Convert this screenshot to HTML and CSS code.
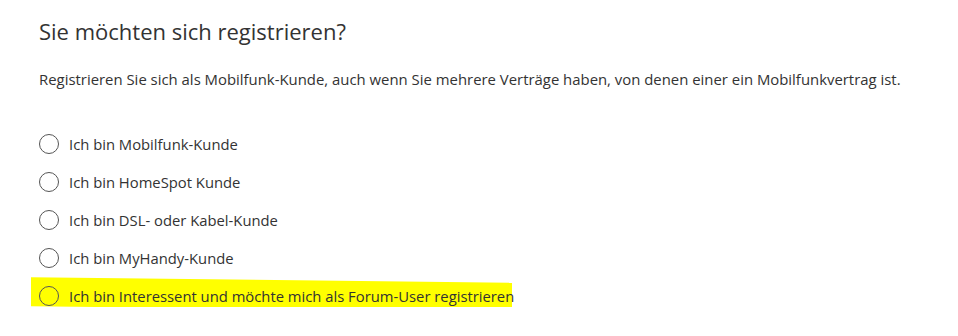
FILE: index.html
```html
<!DOCTYPE html>
<html lang="de">
<head>
<meta charset="utf-8">
<link rel="stylesheet" href="styles.css">
</head>
<body>
<main class="page">
  <h1 class="title">Sie möchten sich registrieren?</h1>
  <p class="intro">Registrieren Sie sich als Mobilfunk-Kunde, auch wenn Sie mehrere Verträge haben, von denen einer ein Mobilfunkvertrag ist.</p>
  <div class="options">
    <label class="option"><span class="radio"></span><span class="label">Ich bin Mobilfunk-Kunde</span></label>
    <label class="option"><span class="radio"></span><span class="label">Ich bin HomeSpot Kunde</span></label>
    <label class="option"><span class="radio"></span><span class="label">Ich bin DSL- oder Kabel-Kunde</span></label>
    <label class="option"><span class="radio"></span><span class="label">Ich bin MyHandy-Kunde</span></label>
    <label class="option option--marked"><span class="radio"></span><span class="label">Ich bin Interessent und möchte mich als Forum-User registrieren</span></label>
  </div>
</main>
</body>
</html>
```
FILE: styles.css
```css
html, body {
  margin: 0;
  padding: 0;
  background: #fff;
}
body {
  font-family: "Open Sans", "Liberation Sans", sans-serif;
  color: #333;
}
.page {
  padding: 16px 0 0 39px;
}
.title {
  margin: 0;
  font-size: 22px;
  font-weight: 400;
  line-height: 30px;
  color: #333;
}
.intro {
  margin: 22px 0 0;
  font-size: 14.9px;
  line-height: 22px;
}
.options {
  margin-top: 43px;
  display: flex;
  flex-direction: column;
  gap: 16px;
}
.option {
  position: relative;
  display: flex;
  align-items: center;
  gap: 10px;
  height: 22px;
  font-size: 14.8px;
  z-index: 0;
  width: max-content;
}
.radio {
  width: 18px;
  height: 18px;
  border: 1.5px solid #555;
  border-radius: 50%;
  flex: none;
}
.option--marked::before {
  content: "";
  position: absolute;
  left: -8px;
  right: 2px;
  top: -5px;
  bottom: -2px;
  background: #ffff00;
  transform: skewY(0.65deg);
  z-index: -1;
}
```
